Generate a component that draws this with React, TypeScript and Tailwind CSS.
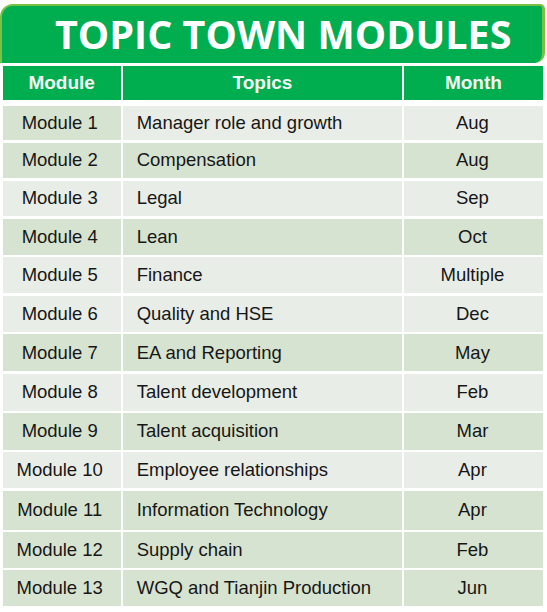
const ROWS = [
  { mod: 'Module 1', topic: 'Manager role and growth', month: 'Aug', tone: 'first', h: 'h-[34px]' },
  { mod: 'Module 2', topic: 'Compensation', month: 'Aug', tone: 'green', h: 'h-[35.5px]' },
  { mod: 'Module 3', topic: 'Legal', month: 'Sep', tone: 'light', h: 'h-[35.5px]' },
  { mod: 'Module 4', topic: 'Lean', month: 'Oct', tone: 'green', h: 'h-[36px]' },
  { mod: 'Module 5', topic: 'Finance', month: 'Multiple', tone: 'light', h: 'h-[36px]' },
  { mod: 'Module 6', topic: 'Quality and HSE', month: 'Dec', tone: 'light', h: 'h-[36px]' },
  { mod: 'Module 7', topic: 'EA and Reporting', month: 'May', tone: 'green', h: 'h-[37px]' },
  { mod: 'Module 8', topic: 'Talent development', month: 'Feb', tone: 'light', h: 'h-[37px]' },
  { mod: 'Module 9', topic: 'Talent acquisition', month: 'Mar', tone: 'green', h: 'h-[36.5px]' },
  { mod: 'Module 10', topic: 'Employee relationships', month: 'Apr', tone: 'light', h: 'h-[36px]' },
  { mod: 'Module 11', topic: 'Information Technology', month: 'Apr', tone: 'green', h: 'h-[39px]' },
  { mod: 'Module 12', topic: 'Supply chain', month: 'Feb', tone: 'green', h: 'h-[35.5px]' },
  { mod: 'Module 13', topic: 'WGQ and Tianjin Production', month: 'Jun', tone: 'green', h: 'h-[36px]' },
];

const GREEN = 'bg-[#d6e3d0]';
const LIGHT = 'bg-[#e9ede7]';

export default function App() {
  return (
    <div className="w-[547px] h-[612px] bg-white pt-[4px] font-['Liberation_Sans',Arial,sans-serif] overflow-hidden">
      {/* banner */}
      <div className="w-[545px] h-[59px] flex items-center pl-[53px] pt-[1px] bg-[#00ad4f] border-t-[2.5px] border-l-[2.5px] border-r-[3px] border-[#78c145] rounded-tl-[13px] rounded-tr-[5px] rounded-br-[10px]">
        <span className="font-['Open_Sans',sans-serif] font-bold text-[39.5px] leading-none text-white">
          TOPIC TOWN MODULES
        </span>
      </div>

      {/* header */}
      <div className="mt-[3px] ml-[2.7px] grid grid-cols-[118px_278.5px_138.5px] gap-x-[2.5px] h-[33.5px]">
        {['Module', 'Topics', 'Month'].map(t => (
          <div key={t} className="bg-[#00ad4f] flex items-center justify-center text-[19px] font-bold text-[#f4f7f2]">
            {t}
          </div>
        ))}
      </div>

      {/* body */}
      <div className="mt-[6.5px] ml-[2.7px] flex flex-col gap-y-[2.5px] text-[18.5px] text-[#161616]">
        {ROWS.map(r => (
          <div key={r.mod} className={`grid grid-cols-[118px_278.5px_138.5px] gap-x-[2.5px] ${r.h}`}>
            <div className={`${r.tone === 'light' ? LIGHT : GREEN} flex items-center justify-center pr-[4px]`}>
              {r.mod}
            </div>
            <div className={`${r.tone === 'green' ? GREEN : LIGHT} flex items-center pl-[13.5px]`}>
              {r.topic}
            </div>
            <div className={`${r.tone === 'green' ? GREEN : LIGHT} flex items-center justify-center pr-[2px]`}>
              {r.month}
            </div>
          </div>
        ))}
      </div>
    </div>
  );
}
